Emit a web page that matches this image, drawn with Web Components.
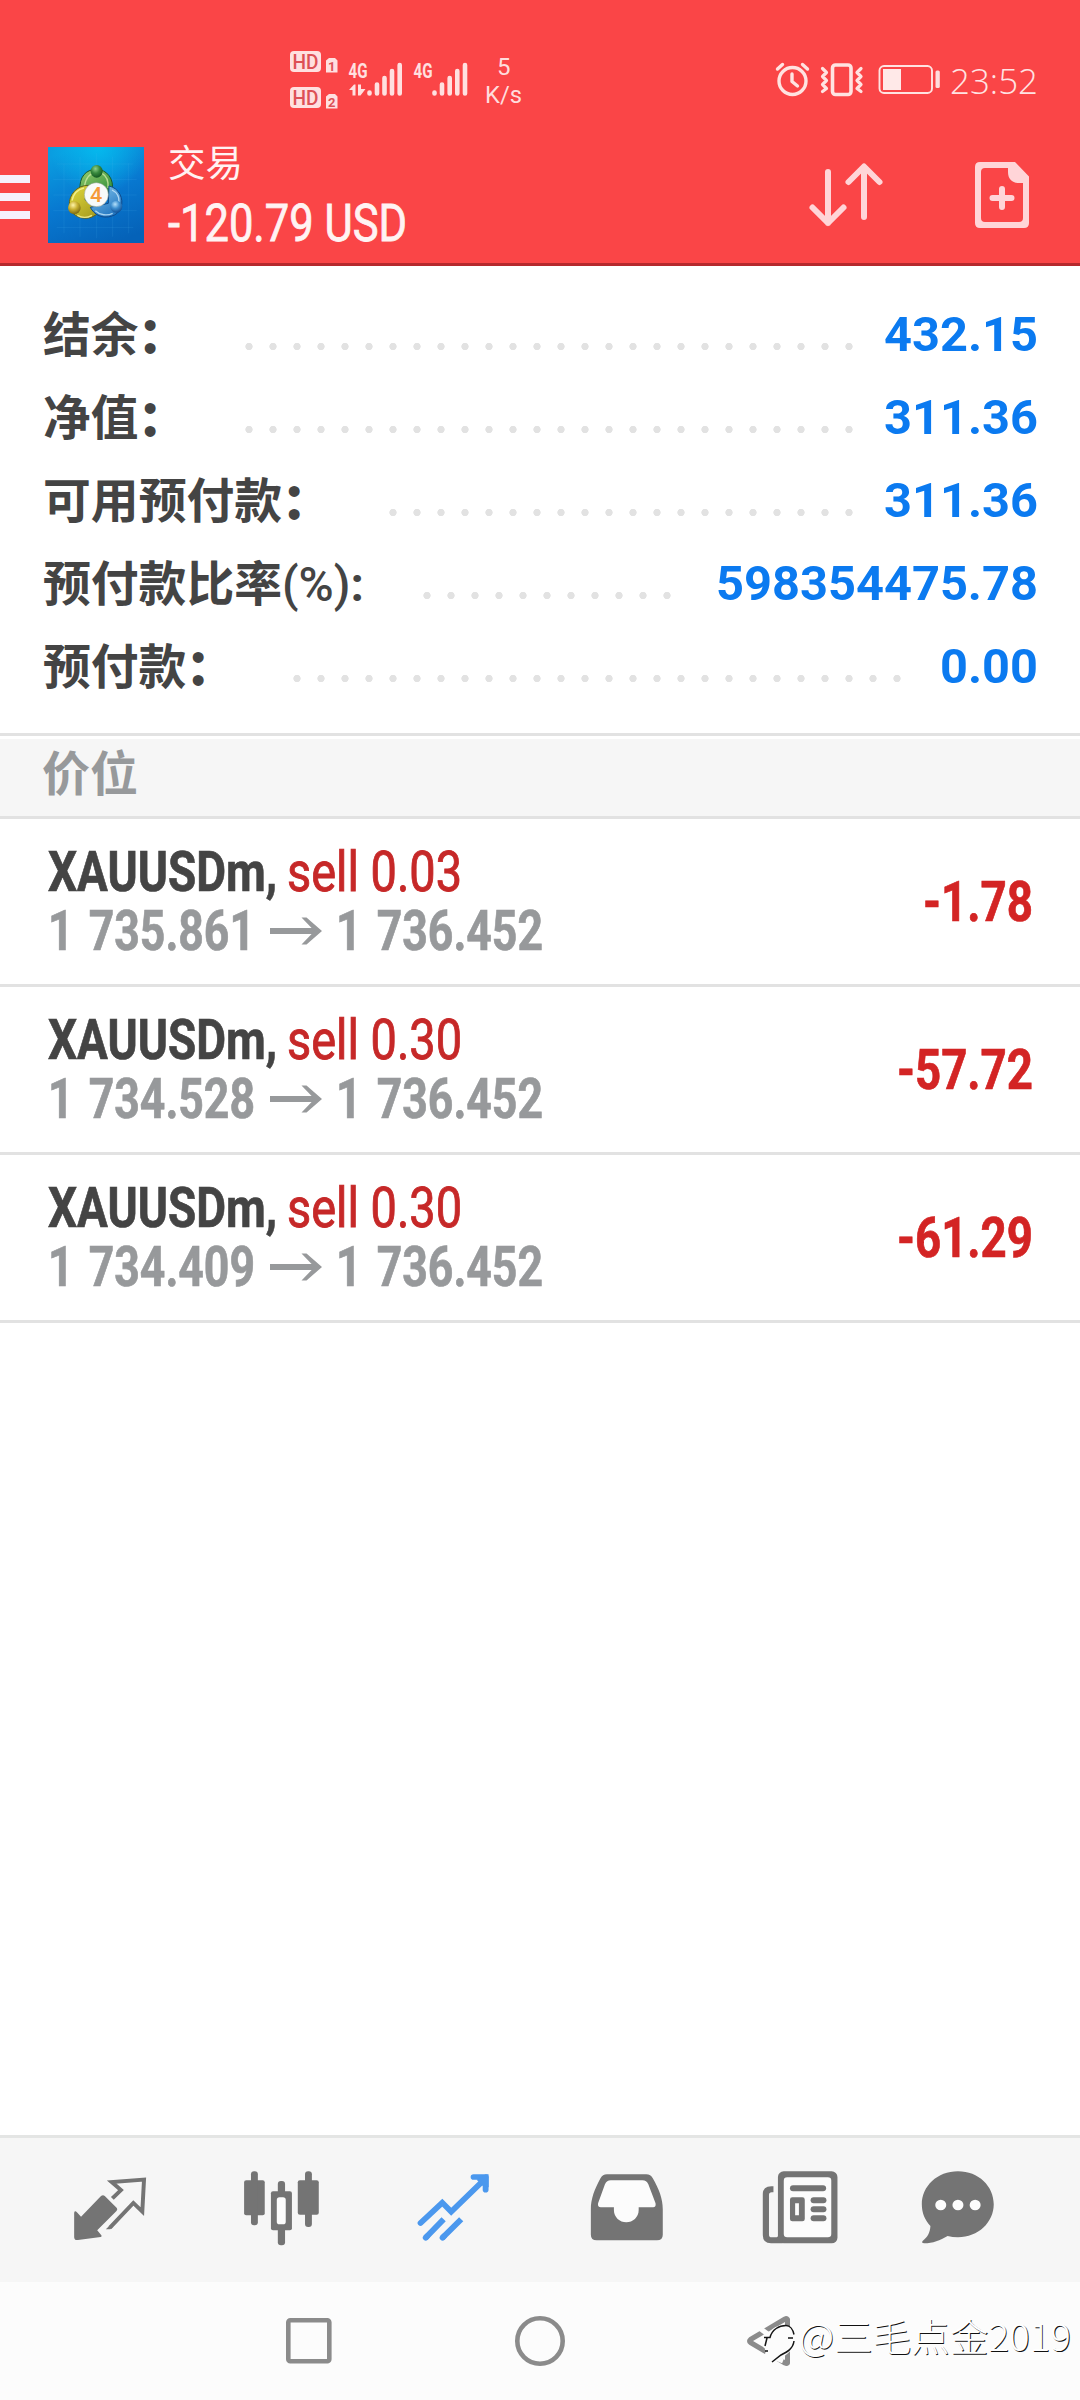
<!DOCTYPE html>
<html lang="zh-CN">
<head>
<meta charset="utf-8">
<title>交易</title>
<style>
html,body{margin:0;padding:0;background:#fff}
body{width:1080px;height:2400px;overflow:hidden;font-family:Roboto,"Noto Sans CJK SC",sans-serif}
</style>
</head>
<body>
<trade-app></trade-app>
<script>
const define = (name, html, after) => {
  const tpl = document.createElement('template');
  tpl.innerHTML = html;
  customElements.define(name, class extends HTMLElement {
    connectedCallback() {
      if (this.shadowRoot) return;
      const root = this.attachShadow({ mode: 'open' });
      root.append(tpl.content.cloneNode(true));
      if (after) after(this, root);
    }
  });
};

/* One line of text squeezed or stretched to the width given in "w". */
define('fit-text', `
<style>
:host{display:block;flex:none;white-space:nowrap}
span{display:inline-block;transform-origin:0 50%}
</style><span><slot></slot></span>`, (el, root) => {
  const w = +el.getAttribute('w');
  el.style.width = w + 'px';
  const span = root.querySelector('span');
  const natural = span.getBoundingClientRect().width;
  if (natural) span.style.transform = `scaleX(${w / natural})`;
});

define('status-bar', `
<style>
:host{display:flex;justify-content:space-between;height:130px;padding:0 40px 0 286px;box-sizing:border-box}
svg{display:block;flex:none}
text{font-family:Roboto,sans-serif}
</style>
<svg width="240" height="130" viewBox="286 0 240 130" fill="#ffe0e0">
  <rect x="290" y="51" width="31" height="21" rx="4"/>
  <rect x="290" y="87" width="31" height="21" rx="4"/>
  <path d="M326 60.500l3-2.500h6l2.500 2.500V72.500h-11.500z"/>
  <path d="M326 96.500l3-2.500h6l2.500 2.500V108.500h-11.500z"/>
  <g fill="#dd5156" font-weight="700">
    <text x="292.500" y="68.500" font-size="20" font-weight="500" textLength="26" lengthAdjust="spacingAndGlyphs">HD</text>
    <text x="292.500" y="104.500" font-size="20" font-weight="500" textLength="26" lengthAdjust="spacingAndGlyphs">HD</text>
    <text x="328" y="71" font-size="13">1</text>
    <text x="328" y="107" font-size="13">2</text>
  </g>
  <g font-weight="700" font-size="20">
    <text x="348.500" y="77.500" textLength="19" lengthAdjust="spacingAndGlyphs">4G</text>
    <text x="413.500" y="77.500" textLength="19" lengthAdjust="spacingAndGlyphs">4G</text>
  </g>
  <path d="M349 90l5-5.500h1.500V95.500h-3V90zM358 84.500h3V89h4.500l-5 6.500H358z"/>
  <g stroke="#ffe0e0" stroke-width="4.600" stroke-linecap="round">
    <path d="M369.500 92.500v1M377 84.500v9M384.500 78v15.500M392 71v22.500M399.700 65v28.500"/>
    <path d="M434.500 92.500v1M442 84.500v9M449.700 78v15.500M457.300 71v22.500M465 65v28.500"/>
  </g>
  <g font-size="24" fill="#ffdcdc">
    <text x="497" y="75">5</text>
    <text x="485" y="103" textLength="37" lengthAdjust="spacingAndGlyphs">K/s</text>
  </g>
</svg>
<svg width="270" height="130" viewBox="770 0 270 130" fill="none" stroke="#ffe3e1">
  <circle cx="792.500" cy="81" r="13.500" stroke-width="3.400"/>
  <path d="M777.500 69l5-4.500M807.500 69l-5-4.500" stroke-width="3.400" stroke-linecap="round"/>
  <path d="M792 74v7.500l5.500 4.500" stroke-width="3.400" stroke-linecap="round" stroke-linejoin="round"/>
  <rect x="832.500" y="65" width="18.500" height="29.500" rx="3" stroke-width="3.600"/>
  <path d="M822.500 68.500l4 4-4 4 4 4-4 4 4 4-4 3M861 68.500l-4 4 4 4-4 4 4 4-4 4 4 3" stroke-width="3.200" stroke-linecap="round" stroke-linejoin="round"/>
  <rect x="879.500" y="66" width="52.500" height="27" rx="4.500" stroke-width="1.900"/>
  <rect x="883" y="69" width="18" height="21" fill="#ffe9e8" stroke="none"/>
  <rect x="935.500" y="70.500" width="4.300" height="17.500" rx="1.500" fill="#ffdcdc" stroke="none"/>
  <text x="950" y="94" font-size="35.500" style="font-family:'Open Sans','Noto Sans',sans-serif" font-weight="300" fill="#ffe3e3" stroke="none" textLength="88" lengthAdjust="spacingAndGlyphs">23:52</text>
</svg>`);

define('app-logo', `
<style>:host{display:block;width:96px;height:96px;flex:none}svg{display:block}</style>
<svg width="96" height="96" viewBox="24 21 288 288">
  <defs>
    <linearGradient id="sky" x1=".3" y1="0" x2=".7" y2="1"><stop offset="0" stop-color="#0a9de0"/><stop offset=".5" stop-color="#0878d0"/><stop offset="1" stop-color="#0562b8"/></linearGradient>
    <radialGradient id="glow" cx=".52" cy="0" r=".5"><stop offset="0" stop-color="#05b9ee"/><stop offset="1" stop-color="#05b9ee" stop-opacity="0"/></radialGradient>
    <linearGradient id="gr" x2=".7" y2="1"><stop offset="0" stop-color="#9bce70"/><stop offset="1" stop-color="#2b8c36"/></linearGradient>
    <linearGradient id="ye" x2=".8" y2="1"><stop offset="0" stop-color="#e3da3d"/><stop offset="1" stop-color="#a79c1f"/></linearGradient>
    <linearGradient id="bl" x2=".6" y2="1"><stop offset="0" stop-color="#87c8ef"/><stop offset="1" stop-color="#2376c0"/></linearGradient>
    <radialGradient id="bg1" cx=".4" cy=".3" r=".7"><stop offset="0" stop-color="#8fd08b"/><stop offset=".5" stop-color="#38893d"/><stop offset="1" stop-color="#145821"/></radialGradient>
    <radialGradient id="by1" cx=".4" cy=".3" r=".7"><stop offset="0" stop-color="#fff4a8"/><stop offset=".5" stop-color="#c8b032"/><stop offset="1" stop-color="#7e6c12"/></radialGradient>
    <radialGradient id="bb1" cx=".4" cy=".3" r=".7"><stop offset="0" stop-color="#b5e0fa"/><stop offset=".5" stop-color="#3e8fd0"/><stop offset="1" stop-color="#125298"/></radialGradient>
  </defs>
  <rect x="24" y="21" width="288" height="288" fill="url(#sky)"/>
  <rect x="24" y="21" width="288" height="288" fill="url(#glow)"/>
  <path d="M72 70v210M120 50v240M170 40v255M218 50v240M266 70v210M50 72h230M40 118h250M40 165h250M40 212h250M50 262h230" stroke="#5fc0f5" stroke-opacity=".18" stroke-width="2" fill="none"/>
  <path d="M120 150c-3-38 17-62 49-62s55 30 47 65c-2 12-10 18-16 20l-64-28z" fill="url(#gr)" stroke="#17582d" stroke-width="3"/>
  <path d="M133 140c4-26 16-40 34-42M186 100c14 8 20 24 18 44" fill="none" stroke="#cfe9a4" stroke-width="4" stroke-opacity=".8"/>
  <path d="M145 136c-35 0-59 29-57 59 1 30 38 48 68 36l22-12-43-40z" fill="url(#ye)" stroke="#5c6220" stroke-width="3"/>
  <path d="M96 182c4-20 18-34 36-38M112 226c14 8 30 8 44 0" fill="none" stroke="#fbf7a0" stroke-width="4" stroke-opacity=".8"/>
  <path d="M207 138c30 6 45 38 36 65-8 26-45 34-66 24-12-5-20-14-26-25l54-12z" fill="url(#bl)" stroke="#0e4a8c" stroke-width="3"/>
  <path d="M216 150c16 8 22 22 21 36M166 212c14 14 36 16 52 8" fill="none" stroke="#c8e8fb" stroke-width="4" stroke-opacity=".8"/>
  <ellipse cx="170" cy="94" rx="18" ry="19" fill="url(#bg1)"/>
  <circle cx="103" cy="203" r="19" fill="url(#by1)"/>
  <circle cx="229" cy="200" r="18" fill="url(#bb1)"/>
  <circle cx="169" cy="164" r="36" fill="#f8fafa" stroke="#909e94" stroke-width="1.500"/>
  <text x="150" y="185" font-family="Roboto,sans-serif" font-size="60" font-weight="500" fill="#f59a3a" textLength="37" lengthAdjust="spacingAndGlyphs">4</text>
</svg>`);

define('app-header', `
<style>
:host{display:block;height:266px;box-sizing:border-box;background:#fa4547;border-bottom:3px solid #b5292d;color:#fff3f3}
.bar{display:flex;height:133px;align-items:flex-start}
.menu{display:grid;gap:10px;width:30px;margin-top:45px;flex:none}
.menu i{display:block;height:8px;background:#f6f0fb}
app-logo{margin:17px 0 0 18px}
.titles{margin-left:24px;padding-top:4px}
.cap{font:400 37px/54px "Noto Sans CJK SC",sans-serif}
.sum{font:400 51px/58px Roboto,sans-serif;margin-top:7px;-webkit-text-stroke:.8px currentColor}
.tools{display:flex;gap:90px;margin:28px 48px 0 auto}
svg{display:block}
</style>
<status-bar></status-bar>
<div class="bar">
  <div class="menu"><i></i><i></i><i></i></div>
  <app-logo></app-logo>
  <div class="titles">
    <fit-text class="cap" w="75">交易</fit-text>
    <fit-text class="sum" w="239">-120.79 USD</fit-text>
  </div>
  <div class="tools">
    <svg width="76" height="74" viewBox="808 158 76 74" fill="none" stroke="#ffd5d8" stroke-width="6" stroke-linecap="round" stroke-linejoin="round"><path d="M828 172v51M812.500 207.500l15.500 15.500 15.500-15.500M864 217v-50M848.500 182l15.500-15.500 15.500 15.500"/></svg>
    <svg width="58" height="74" viewBox="974 158 58 74" fill="#ffd5d8"><path fill-rule="evenodd" d="M980 162h35l14 14.500V223q0 5-5 5H980q-5 0-5-5V167q0-5 5-5zM985 168q-4 0-4 4v46q0 4 4 4h34q4 0 4-4V183h-4c-7 0-11-4-11-11v-4z"/><path d="M1002 189v18M992.500 198h19" stroke="#ffd5d8" stroke-width="6" stroke-linecap="round"/></svg>
  </div>
</div>`);

/* Summary line: label, dotted leader, value. */
define('summary-row', `
<style>
:host{display:flex;height:83px;padding:0 42px 0 43px}
.l{font:700 48px/77px "Noto Sans CJK SC",sans-serif;color:#444}
.c{-webkit-text-stroke:1.800px currentColor}
.r{font-family:Roboto,sans-serif;font-weight:500}
.r b{font-weight:700}
.d{height:83px;background:radial-gradient(circle at 12px 53.500px,#e2e2e2 3.300px,transparent 4px) 0 0/24px 83px repeat-x}
.v{font:700 48px/83px Roboto,sans-serif;color:#0b7af0;margin-left:auto}
</style>
<fit-text class="l"></fit-text><div class="d"></div><fit-text class="v"></fit-text>`, (el, root) => {
  const [l, d, v] = [...root.children].filter(n => n.tagName !== 'STYLE');
  const a = n => el.getAttribute(n);
  const set = (node, w, html) => {
    const copy = document.createElement('fit-text');
    copy.className = node.className;
    copy.setAttribute('w', w);
    copy.innerHTML = html;
    node.replaceWith(copy);
  };
  d.style.marginLeft = (a('from') - 43 - a('lw')) + 'px';
  d.style.width = a('dots') * 24 + 'px';
  set(l, a('lw'), a('label')
    .replace('：', '<span class="c">：</span>')
    .replace('(%):', '<span class="r">(%)<b>:</b></span>'));
  set(v, a('vw'), a('value'));
});

define('account-summary', `
<style>:host{display:block;height:467px;padding-top:26.500px;box-sizing:border-box}</style>
<summary-row label="结余：" lw="143" from="236.500" dots="26" value="432.15" vw="154"></summary-row>
<summary-row label="净值：" lw="143" from="236.500" dots="26" value="311.36" vw="154"></summary-row>
<summary-row label="可用预付款：" lw="287" from="380.500" dots="20" value="311.36" vw="154"></summary-row>
<summary-row label="预付款比率(%):" lw="321" from="415" dots="11" value="598354475.78" vw="322"></summary-row>
<summary-row label="预付款：" lw="191" from="284.500" dots="26" value="0.00" vw="98"></summary-row>`);

define('section-title', `
<style>
:host{display:block;box-sizing:border-box;height:86px;border-top:3px solid #e2e2e2;border-bottom:3px solid #e2e2e2;background:#f6f6f6;box-shadow:inset 0 3px #fff;padding-left:42px;font:700 48px/69px "Noto Sans CJK SC",sans-serif;color:#97999b}
</style><slot></slot>`);

define('position-row', `
<style>
:host{display:flex;justify-content:space-between;box-sizing:border-box;height:168px;border-bottom:3px solid #e2e2e2;padding:24px 47px 0 48px;line-height:59px;font-size:55px;font-weight:700;-webkit-text-stroke:.7px currentColor}
.top,.bot{display:flex;height:59px}
.top{color:#444}
.side{color:#c62828;font-weight:400;margin-left:10px;-webkit-text-stroke:.9px currentColor}
.bot{color:#97999b;word-spacing:5px}
svg{display:block;margin:0 14px 0 15px}
.p{color:#d32424;padding-top:30px}
</style>
<div>
  <div class="top"><fit-text w="229">XAUUSDm,</fit-text><div class="side"></div></div>
  <div class="bot"><div class="a"></div><svg width="52" height="59" viewBox="0 0 52 59" fill="none" stroke="#97999b" stroke-width="6"><path d="M0 29h47"/><path d="M31.500 15.500h5L52 29 36.500 42.500h-5L44.500 29z" fill="#97999b" stroke="none"/></svg><div class="b"></div></div>
</div>
<div class="p"></div>`, (el, root) => {
  const put = (sel, w, text) => {
    const t = document.createElement('fit-text');
    t.setAttribute('w', w);
    t.textContent = text;
    root.querySelector(sel).append(t);
  };
  put('.side', 175, el.getAttribute('side'));
  put('.a', 207, el.getAttribute('open'));
  put('.b', 207, el.getAttribute('now'));
  put('.p', el.getAttribute('pw'), el.getAttribute('profit'));
});

define('tab-bar', `
<style>
:host{display:flex;box-sizing:border-box;height:147px;border-top:3px solid #e4e5e4;background:#f6f6f6;padding:28.700px 0 0 68.900px}
svg{display:block;flex:none;width:82.600px;height:83.300px;margin-right:89.500px;fill:#747474}
svg:nth-of-type(4){margin-right:91.300px}
svg:nth-of-type(5){margin-right:75.700px}
.o{fill:none;stroke:#747474}
.w{fill:#fcfcfc}
</style>
<svg viewBox="200 140 240 250" preserveAspectRatio="none">
  <path d="M293 227q6-4 11 0l35 36q3 5-1 9l-56 58 12 15q3 4-2 5l-66 9q-11 2-11-9V277q2-8 8-1l12 13z"/>
  <path class="o" stroke-width="11.500" d="M326 234l25-25-27-24 94-7-5 96-26-26-68 74"/><path d="M307 327l9-9h13l-9 9z"/>
</svg>
<svg viewBox="700 140 240 250" preserveAspectRatio="none">
  <rect x="709" y="180" width="60" height="105" rx="6"/><rect x="729" y="153" width="20" height="162" rx="9"/>
  <rect x="865" y="180" width="61" height="103" rx="6"/><rect x="886" y="153" width="20" height="167" rx="9"/>
  <rect x="787" y="213" width="61" height="117" rx="6"/><rect x="807" y="182" width="21" height="193" rx="9"/>
  <rect class="w" x="804" y="231" width="26" height="81" rx="8"/>
</svg>
<svg viewBox="1200 140 240 250" preserveAspectRatio="none">
  <g fill="none" stroke="#4b98ee" stroke-width="17" stroke-linecap="round" stroke-linejoin="miter">
    <path d="M1222 308l63-61 26 27 98-98" /><path d="M1376 170h35v38"/>
    <path stroke-linecap="butt" d="M1236 353l53-56M1285 353l55-56"/><path d="M1237 352l4-4M1286 352l4-4"/>
  </g>
  <path d="M1385 178l26-16q9 0 9 9v30l-18-5z" fill="#4b98ee"/>
</svg>
<svg viewBox="130 140 240 250" preserveAspectRatio="none">
  <path fill-rule="evenodd" d="M194 162h114q13 0 19 12c18 32 29 62 29 93v76q0 17-17 17H164q-17 0-17-17v-76c0-31 11-61 28-93q6-12 19-12z"/>
  <path class="w" d="M205 180h92q12 0 17 12l21 57q2 12-7 12h-42v8c0 22-17 37-36 37s-36-15-36-37v-8h-38q-10 0-8-12l20-57q5-12 17-12z"/>
</svg>
<svg viewBox="635 140 240 250" preserveAspectRatio="none">
  <rect x="690" y="153" width="173" height="216" rx="17"/><rect class="w" x="707" y="171" width="138" height="180" rx="10"/>
  <path d="M677 198v18h-5q-8 0-8 8v119q0 8 8 8h11q8 0 8-8V300h12v69h-33q-24 0-24-26V222q0-24 25-24z"/>
  <rect x="725" y="195" width="105" height="18" rx="9"/>
  <path fill-rule="evenodd" d="M732 231h29q7 0 7 7v58q0 7-7 7h-29q-7 0-7-7v-58q0-7 7-7zM740 249v36h11v-36z"/>
  <rect x="785" y="231" width="46" height="18" rx="9"/><rect x="785" y="258" width="46" height="18" rx="9"/><rect x="785" y="285" width="46" height="18" rx="9"/>
</svg>
<svg viewBox="1095 140 240 250" preserveAspectRatio="none">
  <path d="M1214 153c60 0 104 45 104 99s-45 99-104 99q-16 0-30-4c-22 13-43 22-68 22q-10-1-4-8c14-10 21-25 22-44-16-17-25-39-25-65 0-54 45-99 105-99z"/>
  <g class="w"><circle cx="1164" cy="254" r="16"/><circle cx="1214" cy="254" r="16"/><circle cx="1264" cy="254" r="16"/></g>
</svg>`);

define('nav-bar', `
<style>
:host{display:flex;position:relative;height:118px;background:#fcfcfc;padding-left:284px;align-items:flex-start}
svg{display:block;flex:none;margin-top:32px}
.o{fill:none;stroke:#8b8b8b;stroke-width:4.600}
.mark{position:absolute;left:799px;top:25px;font:300 37.500px/56px "Noto Sans CJK SC",sans-serif;color:#fff;text-shadow:.8px 1px 0 #111}
</style>
<svg width="50" height="54" viewBox="0 0 50 54"><rect class="o" x="4.300" y="6.300" width="41" height="41" rx="2"/></svg>
<svg width="54" height="54" viewBox="0 0 54 54" style="margin-left:179px"><circle class="o" cx="27" cy="27" r="22.700"/></svg>
<svg width="56" height="56" viewBox="742 2314 56 56" style="margin-left:175px">
  <path class="o" style="stroke-width:5" stroke-linejoin="round" d="M787.500 2319.500v43.500q-1 1-2.500 0l-34.500-20.500q-2-1.500 0-3l34.500-20.500q1.500-1 2.500.5z"/>
  <path d="M766 2340c2-10 10-15 19-15 8 1 12 8 10 16-2 10-10 16-20 20l-9-7-2-9z" fill="#fcfcfc"/>
  <path d="M758 2327l11 8M765 2354l18 7" stroke="#fcfcfc" stroke-width="5"/>
  <path d="M764 2337.500h6c2-8 9-12 16-12 4 0 7 4 8 9M794 2341c-1 8-7 11-13 14l-9 7M767 2338l-2 8M765 2351h3M788 2338h5" fill="none" stroke="#151515" stroke-width="1.500"/>
</svg>
<fit-text class="mark" w="272">@三毛点金2019</fit-text>`);

define('trade-app', `
<style>
:host{display:flex;flex-direction:column;width:1080px;height:2400px;background:#fff}
main{flex:1}
</style>
<app-header></app-header>
<main>
  <account-summary></account-summary>
  <section-title>价位</section-title>
  <position-row side="sell 0.03" open="1 735.861" now="1 736.452" profit="-1.78" pw="110"></position-row>
  <position-row side="sell 0.30" open="1 734.528" now="1 736.452" profit="-57.72" pw="136"></position-row>
  <position-row side="sell 0.30" open="1 734.409" now="1 736.452" profit="-61.29" pw="136"></position-row>
</main>
<tab-bar></tab-bar>
<nav-bar></nav-bar>`);
</script>
</body>
</html>
